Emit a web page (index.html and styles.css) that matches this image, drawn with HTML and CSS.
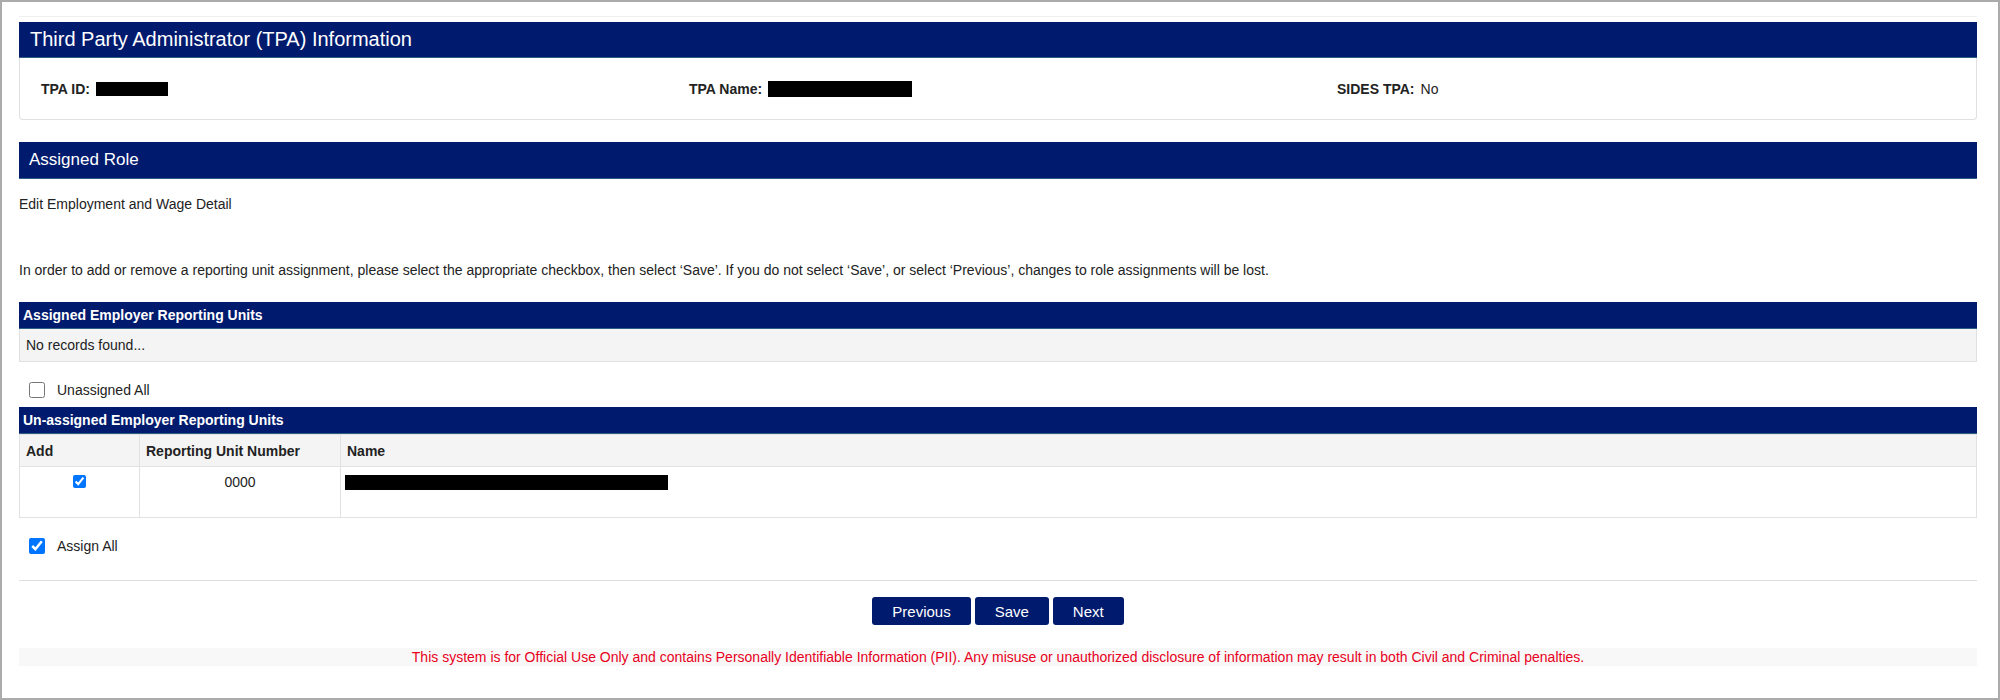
FILE: index.html
```html
<!DOCTYPE html>
<html lang="en">
<head>
    <meta charset="UTF-8">
    <title>TPA Role Assignment</title>
    <link rel="stylesheet" href="styles.css">
</head>
<body>
    <div class="frame">
        <div class="page">
            <!-- TPA Information -->
            <h2 class="bar bar-title">Third Party Administrator (TPA) Information</h2>
            <div class="info-card">
                <div class="info-col"><span class="info-label">TPA ID:</span><span class="redact redact-id"></span></div>
                <div class="info-col"><span class="info-label">TPA Name:</span><span class="redact redact-name"></span></div>
                <div class="info-col"><span class="info-label">SIDES TPA:</span><span>No</span></div>
            </div>

            <!-- Assigned Role -->
            <h3 class="bar bar-sub">Assigned Role</h3>
            <p class="role-name">Edit Employment and Wage Detail</p>
            <p class="note">In order to add or remove a reporting unit assignment, please select the appropriate checkbox, then select ‘Save’. If you do not select ‘Save’, or select ‘Previous’, changes to role assignments will be lost.</p>

            <div class="bar bar-table">Assigned Employer Reporting Units</div>
            <div class="empty-row">No records found...</div>

            <label class="check-row">
                <input type="checkbox" class="big-check">
                <span>Unassigned All</span>
            </label>

            <div class="bar bar-table">Un-assigned Employer Reporting Units</div>
            <table class="units">
                <thead>
                    <tr>
                        <th class="col-add">Add</th>
                        <th class="col-num">Reporting Unit Number</th>
                        <th>Name</th>
                    </tr>
                </thead>
                <tbody>
                    <tr>
                        <td class="center"><input type="checkbox" class="small-check" checked></td>
                        <td class="center">0000</td>
                        <td class="name-cell"><span class="redact redact-unit"></span></td>
                    </tr>
                </tbody>
            </table>

            <label class="check-row check-assign">
                <input type="checkbox" class="big-check" checked>
                <span>Assign All</span>
            </label>

            <hr class="divider">

            <div class="actions">
                <button type="button" class="btn">Previous</button>
                <button type="button" class="btn">Save</button>
                <button type="button" class="btn">Next</button>
            </div>

            <div class="pii-notice">This system is for Official Use Only and contains Personally Identifiable Information (PII). Any misuse or unauthorized disclosure of information may result in both Civil and Criminal penalties.</div>
        </div>
    </div>
</body>
</html>
```

FILE: styles.css
```css
body {
    margin: 0;
    font-family: "Liberation Sans", Arial, sans-serif;
    color: #222;
    background-color: #fff;
}
.frame {
    height: 700px;
    box-sizing: border-box;
    border: 2px solid #ababab;
    padding: 14px 21px 0 17px;
}
.page {
    border-top: 1px solid #f0f0f0;
    padding-top: 5px;
}
.bar {
    margin: 0;
    background-color: #001a6e;
    color: white;
    font-weight: normal;
    border-bottom: 1px solid #2d5f86;
}
.bar-title {
    height: 35px;
    line-height: 35px;
    padding-left: 11px;
    font-size: 20px;
}
.info-card {
    display: grid;
    grid-template-columns: 1fr 1fr 1fr;
    padding: 21px 6px 20px;
    border: 1px solid #e0e0e0;
    border-top: none;
    border-radius: 0 0 4px 4px;
    font-size: 14px;
    line-height: 20px;
}
.info-col {
    padding: 0 15px;
    display: flex;
    align-items: center;
}
.info-label {
    font-weight: bold;
    margin-right: 6px;
}
.redact {
    display: inline-block;
    background-color: #000;
}
.redact-id {
    width: 72px;
    height: 14px;
}
.redact-name {
    width: 144px;
    height: 16px;
}
.redact-unit {
    width: 323px;
    height: 15px;
    margin-top: 3px;
}
.bar-sub {
    margin-top: 22px;
    height: 36px;
    line-height: 36px;
    padding-left: 10px;
    font-size: 17px;
}
.role-name {
    margin: 15px 0 0;
    font-size: 14px;
    line-height: 20px;
}
.note {
    margin: 46px 0 0;
    font-size: 14px;
    line-height: 20px;
}
.bar-table {
    margin-top: 22px;
    height: 26px;
    line-height: 26px;
    padding-left: 4px;
    font-size: 14px;
    font-weight: bold;
    border-bottom: 1px solid #2d5f86;
}
.empty-row {
    height: 32px;
    line-height: 32px;
    padding-left: 6px;
    font-size: 14px;
    background-color: #f4f4f4;
    border: 1px solid #e0e0e0;
    border-top: none;
}
.check-row {
    display: flex;
    align-items: center;
    margin: 20px 0 9px 10px;
    font-size: 14px;
    line-height: 16px;
}
.check-row + .bar-table {
    margin-top: 0;
}
.big-check {
    width: 16px;
    height: 16px;
    margin: 0 12px 0 0;
}
.units {
    width: 100%;
    border-collapse: collapse;
    font-size: 14px;
}
.units th, .units td {
    border: 1px solid #e2e2e2;
    padding: 0 6px;
    text-align: left;
}
.units th {
    height: 31px;
    background-color: #f4f4f4;
    font-weight: bold;
}
.units td {
    height: 51px;
    vertical-align: top;
    padding-top: 5px;
    line-height: 20px;
    box-sizing: border-box;
}
.units .center {
    text-align: center;
}
.units .name-cell {
    padding-left: 4px;
}
.col-add {
    width: 107px;
}
.col-num {
    width: 188px;
}
.small-check {
    width: 13px;
    height: 13px;
    margin: 3px 0 0;
}
.check-assign {
    margin: 20px 0 0 10px;
}
.divider {
    margin: 26px 0 0;
    border: none;
    border-top: 1px solid #dedede;
}
.actions {
    display: flex;
    justify-content: center;
    gap: 4px;
    margin-top: 16px;
}
.btn {
    height: 28px;
    padding: 0 20px;
    background-color: #001a6e;
    color: white;
    border: none;
    border-radius: 3px;
    font-family: "Liberation Sans", Arial, sans-serif;
    font-size: 15px;
    cursor: pointer;
}
.pii-notice {
    margin-top: 23px;
    height: 18px;
    line-height: 18px;
    background-color: #f8f8f8;
    color: #e8001c;
    font-size: 14px;
    text-align: center;
}
```
